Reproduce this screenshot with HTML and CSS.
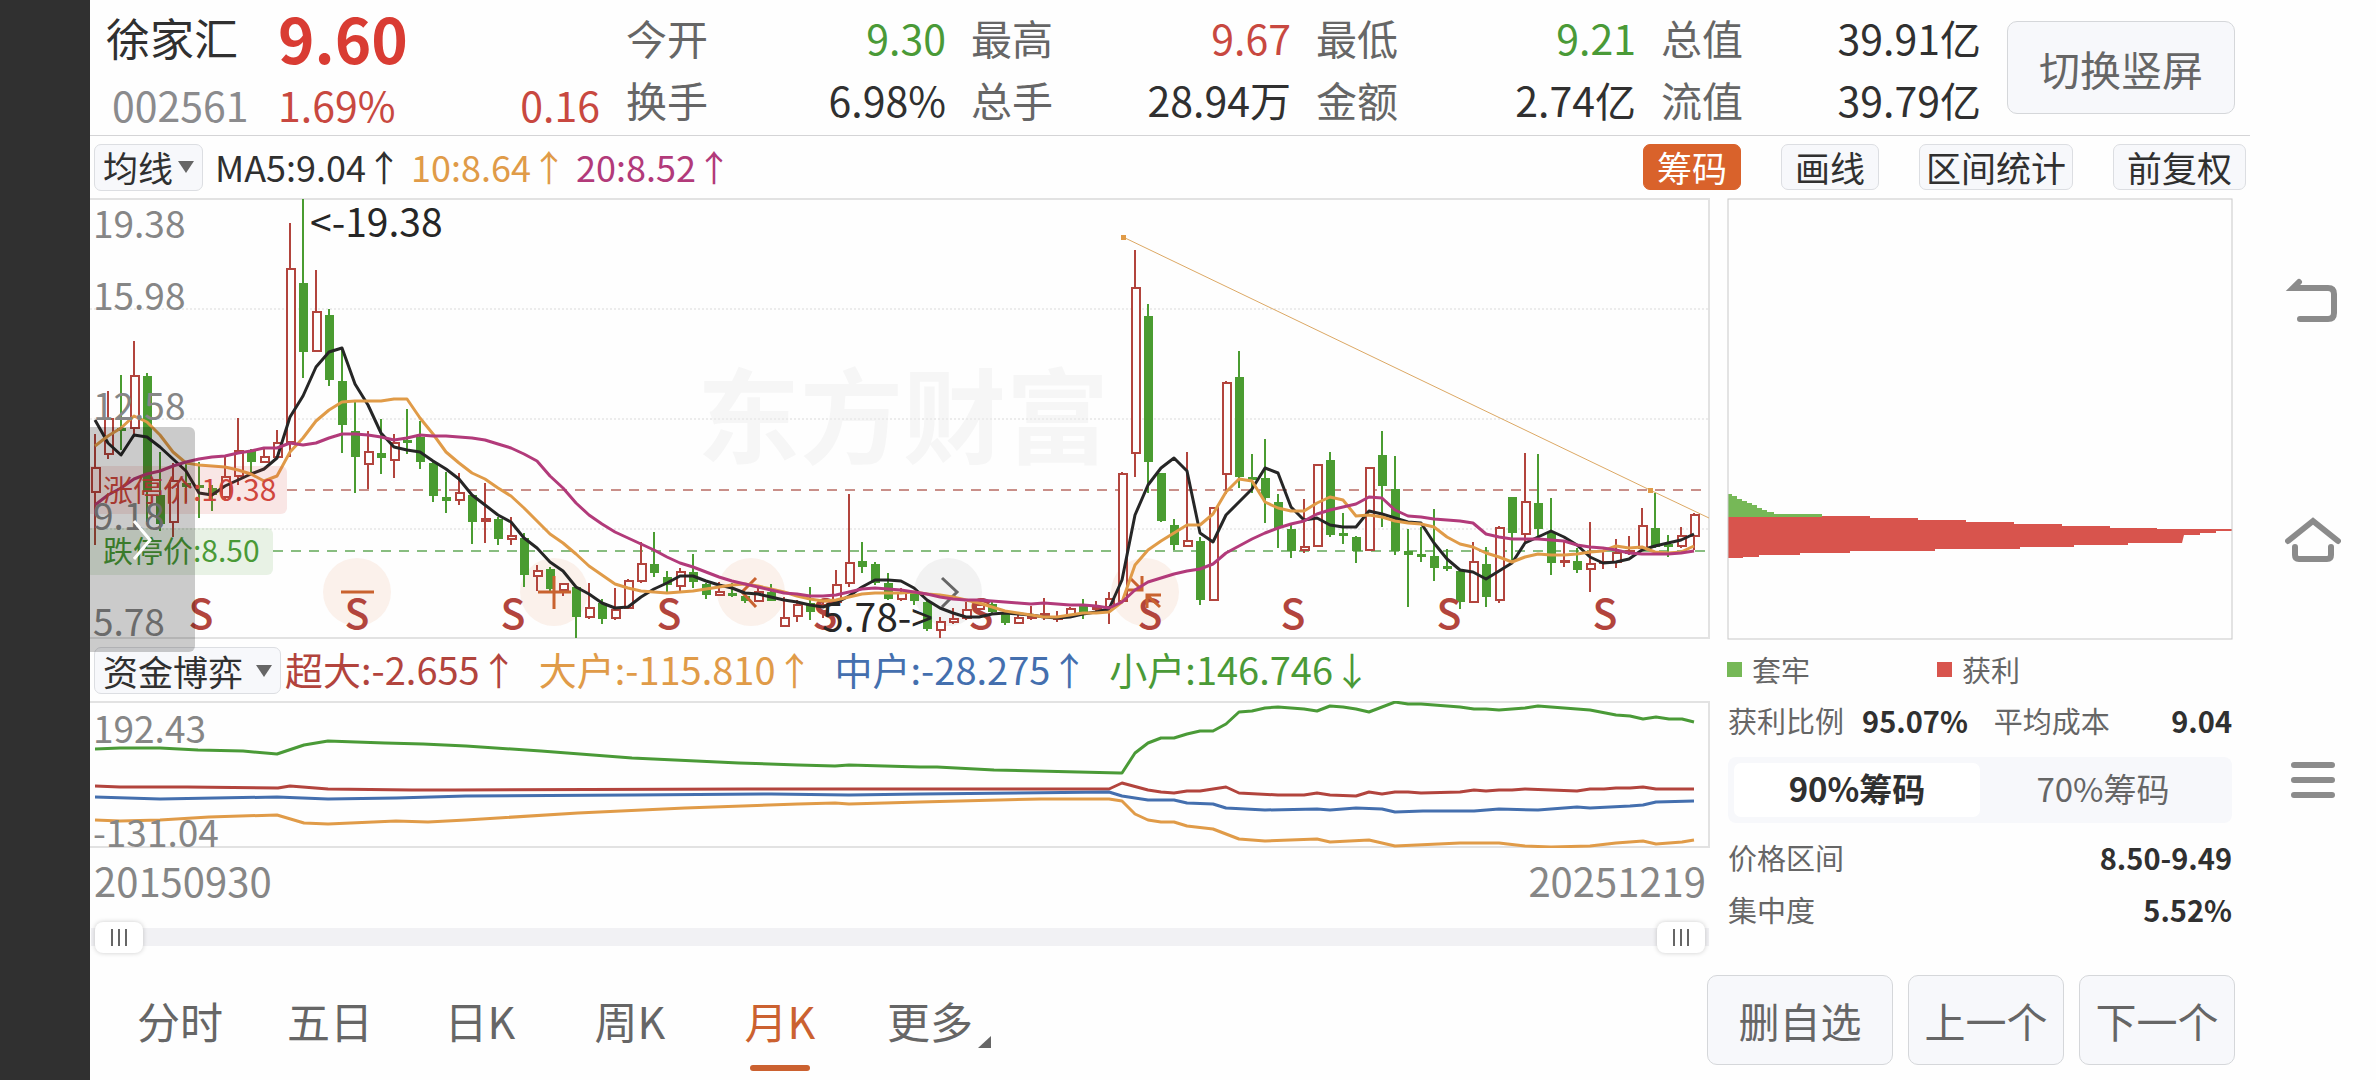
FILE: index.html
```
<!DOCTYPE html>
<html lang="zh-CN">
<head>
  <meta charset="UTF-8" />
  <meta name="viewport" content="width=device-width, initial-scale=1.0"/>
  <title>徐家汇 002561</title>
  <link rel="stylesheet" href="styles.css">
</head>
<body>
  <div class="bezel"></div>

  <main class="app">
    <header class="summary">
      <div class="quote">
        <h1 class="name">徐家汇</h1>
        <strong class="price">9.60</strong>
        <span class="code">002561</span>
        <div class="change"><span>1.69%</span><span>0.16</span></div>
      </div>
      <dl class="stats">
        <div><dt>今开</dt><dd class="down">9.30</dd></div>
        <div><dt>最高</dt><dd class="up">9.67</dd></div>
        <div><dt>最低</dt><dd class="down">9.21</dd></div>
        <div><dt>总值</dt><dd>39.91亿</dd></div>
        <div><dt>换手</dt><dd>6.98%</dd></div>
        <div><dt>总手</dt><dd>28.94万</dd></div>
        <div><dt>金额</dt><dd>2.74亿</dd></div>
        <div><dt>流值</dt><dd>39.79亿</dd></div>
      </dl>
      <button class="btn rotate">切换竖屏</button>
    </header>

    <div class="toolbar">
      <div class="picker">
        <select aria-label="主图指标"><option>均线</option></select>
        <span class="caret"></span>
      </div>
      <p class="ma-values">
        <span>MA5:9.04↑</span>
        <span class="ma10">10:8.64↑</span>
        <span class="ma20">20:8.52↑</span>
      </p>
      <div class="tools">
        <button class="tool active">筹码</button>
        <button class="tool">画线</button>
        <button class="tool wide">区间统计</button>
        <button class="tool">前复权</button>
      </div>
    </div>

    <div class="content">
      <section class="charts">
        <div class="kline">
          <svg id="kline" viewBox="90 198 1620 442">
            <text class="watermark" x="697" y="456">东方财富</text>
            <g class="frame">
              <path d="M90 199H1709V638H90"/>
              <path class="dots" d="M90 309H1709M90 419H1709M90 529H1709"/>
            </g>
            <path class="limit-up" d="M287 490H1709"/>
            <path class="limit-down" d="M273 551H1709"/>
            <g class="marks">
              <circle cx="357" cy="592" r="34"/>
              <circle cx="554" cy="592" r="34"/>
              <circle cx="751" cy="592" r="34"/>
              <circle class="gray" cx="948" cy="592" r="34"/>
              <circle cx="1145" cy="592" r="34"/>
            </g>
            <g id="candles"></g>
            <g class="trend">
              <path d="M1123 237L1650 490L1709 518"/>
              <rect x="1121" y="235" width="5" height="5"/>
              <rect x="1648" y="488" width="5" height="5"/>
            </g>
            <g id="signals" class="signals"></g>
            <g class="mark-icons">
              <path d="M341 592H374"/>
              <path d="M538 592H571M554 576V609"/>
              <path d="M756 578L742 592L756 607"/>
              <path class="gray" d="M942 578L957 592L942 607"/>
              <path d="M1130 578L1141 589M1142 576V590H1128M1161 595H1147V608M1148 596L1160 607"/>
            </g>
            <g id="averages"></g>
            <g class="note">
              <text x="310" y="237">&lt;-19.38</text>
              <text x="822" y="632">5.78-&gt;</text>
            </g>
            <rect class="tag-up" x="86" y="466" width="201" height="48" rx="6"/>
            <rect class="tag-down" x="86" y="528" width="187" height="47" rx="6"/>
            <text class="tag-text up" x="103" y="501">涨停价:10.38</text>
            <text class="tag-text down" x="103" y="562">跌停价:8.50</text>
            <g class="axis">
              <text x="93" y="238">19.38</text>
              <text x="93" y="310">15.98</text>
              <text x="93" y="420">12.58</text>
              <text x="93" y="530">9.18</text>
              <text x="93" y="636">5.78</text>
            </g>
          </svg>
          <button class="drawer" aria-label="展开">
            <svg viewBox="0 0 20 42"><path d="M2 2L18 21L2 40"/></svg>
          </button>
        </div>

        <div class="flow-bar">
          <div class="picker">
            <select class="wide" aria-label="副图指标"><option>资金博弈</option></select>
            <span class="caret"></span>
          </div>
          <p class="flow-values">
            <span class="huge">超大:-2.655↑</span>
            <span class="big">大户:-115.810↑</span>
            <span class="mid">中户:-28.275↑</span>
            <span class="small">小户:146.746↓</span>
          </p>
        </div>

        <svg class="flow" viewBox="90 701 1620 147">
          <path class="flow-frame" d="M90 702H1709V847H90"/>
          <polyline class="small" points="95,749 120,748 134,748 160,748 198,750 243,751 277,754 304,745 328,741 356,742 385,743 423,744 466,746 541,751 632,758 739,763 798,765 835,766 849,765 920,767 937,767 994,770 1120,773 1122,773 1135,753 1148,743 1161,738 1174,738 1187,734 1200,731 1213,731 1226,724 1239,712 1252,711 1265,708 1278,707 1291,708 1304,709 1317,711 1330,706 1343,707 1356,709 1369,712 1395,702 1408,704 1421,704 1460,707 1474,709 1486,709 1499,710 1512,709 1525,708 1538,706 1577,709 1590,710 1616,715 1630,716 1643,719 1656,717 1669,719 1682,719 1694,722"/>
          <polyline class="huge" points="95,786 120,787 187,787 278,788 290,786 328,789 412,790 455,790 750,789 920,789 1031,789 1109,789 1122,783 1148,790 1161,792 1174,793 1187,791 1200,791 1226,787 1239,793 1278,795 1304,795 1317,793 1330,795 1356,796 1369,792 1382,794 1395,792 1408,792 1421,793 1460,792 1474,790 1486,791 1499,790 1512,790 1525,789 1551,790 1577,791 1590,789 1604,789 1616,788 1630,788 1643,787 1656,789 1694,789"/>
          <polyline class="mid" points="95,797 160,799 277,797 328,799 396,798 466,796 632,795 771,794 849,795 920,794 1109,792 1122,796 1148,800 1161,800 1174,800 1187,803 1213,804 1226,808 1265,810 1317,809 1330,810 1356,808 1382,809 1395,812 1423,811 1474,811 1499,809 1538,810 1577,807 1590,808 1630,806 1643,805 1656,802 1694,801"/>
          <polyline class="big" points="95,820 120,821 160,820 209,817 277,815 304,823 328,824 396,821 428,822 466,820 578,813 685,808 798,804 835,803 849,804 920,802 1041,799 1109,799 1122,801 1135,814 1148,820 1161,822 1174,822 1187,826 1213,829 1239,839 1265,841 1317,839 1330,842 1369,840 1395,846 1460,843 1499,843 1525,846 1551,847 1590,846 1616,843 1643,841 1656,844 1682,842 1694,840"/>
          <g class="axis">
            <text x="93" y="743">192.43</text>
            <text x="93" y="847">-131.04</text>
          </g>
        </svg>

        <div class="dates"><time>20150930</time><time>20251219</time></div>

        <div class="range">
          <input type="range" aria-label="开始日期" min="0" max="123" value="0">
          <input type="range" aria-label="结束日期" min="0" max="123" value="123">
        </div>
      </section>

      <aside class="chips">
        <svg class="chip-chart" viewBox="1727 198 506 442">
          <path class="trapped" d="M1728 494H1732V496H1737V499H1742V501H1747V503H1752V505H1757V508H1762V510H1767V512H1774V514H1822V517H1728Z"/>
          <path class="profit" d="M1728 517H1822V516H1870V518H1918V520H1966V522H2014V524H2062V526H2110V528H2157V529H2232V531H2216V533H2200V535H2184L2182 543H2128V545H2074V547H2020V549H1935V551H1850V553H1800V555H1759V557H1743V558H1728Z"/>
          <rect class="chip-frame" x="1728" y="199" width="504" height="440"/>
        </svg>
        <ul class="legend">
          <li><i class="trapped"></i>套牢</li>
          <li><i class="profit"></i>获利</li>
        </ul>
        <dl class="facts">
          <dt>获利比例</dt><dd>95.07%</dd>
          <dt>平均成本</dt><dd class="end">9.04</dd>
        </dl>
        <div class="segment">
          <button class="on">90%筹码</button>
          <button>70%筹码</button>
        </div>
        <dl class="facts"><dt>价格区间</dt><dd class="end">8.50-9.49</dd></dl>
        <dl class="facts"><dt>集中度</dt><dd class="end">5.52%</dd></dl>
      </aside>
    </div>

    <footer class="bottom">
      <nav class="tabs">
        <button>分时</button>
        <button>五日</button>
        <button>日K</button>
        <button>周K</button>
        <button class="on">月K</button>
        <button class="more">更多</button>
      </nav>
      <div class="actions">
        <button class="btn remove">删自选</button>
        <button class="btn">上一个</button>
        <button class="btn">下一个</button>
      </div>
    </footer>
  </main>

  <nav class="system">
    <button aria-label="返回"><svg viewBox="0 0 56 48"><path d="M14 6L8 12H43Q49 12 49 18V37Q49 43 43 43H15"/></svg></button>
    <button aria-label="主页"><svg viewBox="0 0 56 48"><path d="M3 25L28 5L53 25M10 31V39Q10 43 14 43H42Q46 43 46 39V31"/></svg></button>
    <button aria-label="菜单"><svg viewBox="0 0 56 48"><path d="M9 9H47M9 24H47M9 39H47"/></svg></button>
  </nav>

  <script src="chart.js"></script>
</body>
</html>
```
FILE: styles.css
```
* {
  box-sizing: border-box;
}

body {
  display: flex;
  min-height: 100vh;
  margin: 0;
  background: #fefefe;
  color: #303030;
  font-family: "Noto Sans CJK SC", sans-serif;
  font-size: 41px;
}

h1, p, dl, dd, ul {
  margin: 0;
  padding: 0;
}

button, select {
  font-family: inherit;
  font-size: inherit;
  color: inherit;
  padding: 0;
  border: none;
  background: none;
  cursor: pointer;
}

.bezel {
  flex: none;
  width: 90px;
  background: #303030;
}

.app {
  flex: 1;
  min-width: 0;
  display: flex;
  flex-direction: column;
}

/* top summary */
.summary {
  display: flex;
  align-items: flex-start;
  gap: 26px;
  padding: 6px 15px 0 16px;
  height: 136px;
  border-bottom: 1px solid #d4d4d6;
}

.quote {
  display: grid;
  grid-template-columns: 172px 322px;
  line-height: 62px;
}

.name {
  font-size: 44px;
  font-weight: 400;
}

.price {
  font-size: 62px;
  color: #d93c33;
}

.code {
  padding: 5px 0 0 6px;
  color: #8b8b8d;
}

.change {
  display: flex;
  justify-content: space-between;
  padding-top: 5px;
  color: #c84840;
}

.stats {
  flex: 1;
  display: grid;
  grid-template-columns: repeat(4, 1fr);
  column-gap: 25px;
  line-height: 62px;
}

.stats div {
  display: flex;
  justify-content: space-between;
}

.stats dt {
  color: #666;
}

.stats .up {
  color: #c84840;
}

.stats .down {
  color: #4a9a37;
}

.btn {
  border: 1px solid #d5d7da;
  border-radius: 10px;
  background: #f7f8fb;
  color: #666;
}

.rotate {
  width: 228px;
  height: 93px;
  margin-top: 15px;
}

/* indicator rows */
.toolbar, .flow-bar {
  display: flex;
  align-items: center;
  padding-left: 4px;
}

.toolbar {
  height: 62px;
}

.picker {
  display: flex;
  align-items: center;
  height: 47px;
  padding: 0 8px;
  border: 1px solid #dcdee2;
  border-radius: 7px;
  background: #f7f8fb;
  font-size: 35px;
}

.picker select {
  appearance: none;
  width: 75px;
  height: 45px;
  line-height: 44px;
}

.picker select.wide {
  width: 153px;
}

.caret {
  border: 8px solid transparent;
  border-top: 12px solid #666;
  border-bottom: none;
}

.ma-values {
  display: flex;
  gap: 9px;
  margin-left: 12px;
  padding-bottom: 3px;
  font-size: 36px;
}

.ma10 {
  color: #e09b48;
}

.ma20 {
  color: #b23a7a;
}

.tools {
  display: flex;
  gap: 40px;
  margin-left: auto;
  padding-right: 4px;
}

.tool {
  height: 46px;
  padding: 0 13px;
  border: 1px solid #dcdee2;
  border-radius: 7px;
  background: #f7f8fb;
  font-size: 35px;
  line-height: 42px;
}

.tool.wide {
  padding: 0 6px;
}

.tool.active {
  border-color: #d9622b;
  background: #d9622b;
  color: #fff;
}

/* charts */
.content {
  display: grid;
  grid-template-columns: minmax(0, 1fr) 506px;
  column-gap: 17px;
  padding-right: 17px;
}

.content svg {
  display: block;
  width: 100%;
}

.kline {
  position: relative;
}

svg path, svg polyline {
  fill: none;
}

.frame path, .flow-frame {
  stroke: #e2e2e2;
  stroke-width: 2;
}

.frame .dots {
  stroke: #ececec;
  stroke-dasharray: 2 2;
}

.watermark {
  font-size: 103px;
  font-weight: 700;
  fill: #f6f6f6;
}

.limit-up, .limit-down {
  stroke: #c98f89;
  stroke-width: 2;
  stroke-dasharray: 10 8;
}

.limit-down {
  stroke: #88bd80;
}

.marks circle {
  fill: #fbf1eb;
}

.marks .gray {
  fill: #f2f2f2;
}

.mark-icons path {
  stroke: #c9622f;
  stroke-width: 3;
}

.mark-icons .gray {
  stroke: #666;
}

.candle-up {
  stroke: #b2443d;
  stroke-width: 2;
  fill: #fefefe;
}

.candle-down {
  stroke: #4a9c31;
  stroke-width: 2;
  fill: #4a9c31;
}

#averages polyline {
  stroke: #262626;
  stroke-width: 3;
  stroke-linejoin: round;
}

#averages .line10 {
  stroke: #e09b48;
}

#averages .line20 {
  stroke: #b23a7a;
}

.trend path {
  stroke: #dca864;
  stroke-width: 1;
}

.trend rect {
  fill: #e09b48;
}

.signals text {
  font-size: 41px;
  font-weight: 500;
  text-anchor: middle;
  fill: #b2443d;
}

.note text {
  font-size: 39px;
  fill: #262626;
}

.axis text {
  font-size: 37px;
  fill: #868686;
}

.tag-up {
  fill: rgba(217, 60, 51, 0.12);
}

.tag-down {
  fill: rgba(74, 156, 49, 0.12);
}

.tag-text {
  font-size: 30px;
}

.tag-text.up {
  fill: #d0463d;
}

.tag-text.down {
  fill: #4a9a37;
}

.drawer {
  position: absolute;
  left: 0;
  bottom: -12px;
  width: 105px;
  height: 225px;
  border-radius: 0 6px 6px 0;
  background: rgba(0, 0, 0, 0.2);
}

.drawer svg {
  width: 20px;
  margin-left: 42px;
}

.drawer path {
  stroke: #fff;
  stroke-width: 3;
}

.flow-bar {
  height: 61px;
}

.flow-values {
  display: flex;
  gap: 21px;
  margin-left: 4px;
  padding-bottom: 3px;
  font-size: 38px;
  line-height: 46px;
}

.flow-values .huge {
  color: #b2443d;
}

.flow-values .big {
  color: #e09b48;
}

.flow-values .mid {
  color: #446fae;
}

.flow-values .small {
  color: #4a9a37;
}

.flow polyline {
  stroke-width: 3;
  stroke-linejoin: round;
}

.flow .huge {
  stroke: #b2443d;
}

.flow .big {
  stroke: #e09b48;
}

.flow .mid {
  stroke: #446fae;
}

.flow .small {
  stroke: #4a9a37;
}

.dates {
  display: flex;
  justify-content: space-between;
  padding: 0 4px;
  color: #868686;
  font-size: 40px;
  line-height: 64px;
}

/* period slider, both thumbs share one track */
.range {
  display: grid;
  align-items: center;
  margin: 9px 1px 0;
  padding: 0 4px;
  background: linear-gradient(#f1f1f4, #f1f1f4) center / 100% 18px no-repeat;
}

.range input {
  grid-area: 1 / 1;
  appearance: none;
  width: 100%;
  height: 32px;
  margin: 0;
  background: none;
  pointer-events: none;
}

.range input::-webkit-slider-thumb {
  appearance: none;
  width: 48px;
  height: 31px;
  border-radius: 8px;
  background:
    linear-gradient(90deg, #666 2px, transparent 2px 7px, #666 7px 9px, transparent 9px 14px, #666 14px) center / 16px 17px no-repeat,
    #fff;
  box-shadow: 0 0 5px rgba(0, 0, 0, 0.2);
  pointer-events: auto;
}

/* chip distribution */
.chips {
  color: #666;
  font-size: 29px;
}

.chip-frame {
  fill: none;
  stroke: #c8c8c8;
  stroke-width: 1;
}

.chips path.trapped {
  fill: #76b857;
}

.chips path.profit {
  fill: #d8544d;
}

.legend {
  display: flex;
  list-style: none;
  line-height: 58px;
}

.legend li {
  display: flex;
  align-items: center;
  gap: 10px;
  width: 210px;
}

.legend i {
  width: 15px;
  height: 15px;
}

.legend .trapped {
  background: #76b857;
}

.legend .profit {
  background: #d8544d;
}

.facts {
  display: flex;
  gap: 18px;
  padding: 0 1px;
  line-height: 52px;
}

.facts dd {
  color: #303030;
  font-weight: 700;
}

.facts dd + dt {
  margin-left: 8px;
}

.facts .end {
  margin-left: auto;
}

.legend + .facts {
  line-height: 44px;
}

.segment {
  display: grid;
  grid-template-columns: 1fr 1fr;
  height: 66px;
  margin: 15px 1px 8px;
  padding: 6px;
  border-radius: 8px;
  background: #f7f8fb;
  font-size: 33px;
}

.segment button {
  padding-bottom: 4px;
  border-radius: 7px;
  line-height: 48px;
}

.segment .on {
  background: #fff;
  color: #303030;
  font-weight: 700;
}

/* bottom bar */
.bottom {
  display: flex;
  justify-content: space-between;
  align-items: flex-start;
  margin-top: auto;
  padding: 0 15px 15px;
}

.tabs {
  display: flex;
  color: #666;
  font-size: 43px;
}

.tabs button {
  position: relative;
  width: 150px;
  height: 90px;
}

.tabs .on {
  color: #cb6130;
}

.tabs .on::after {
  content: "";
  position: absolute;
  left: 45px;
  right: 45px;
  bottom: -6px;
  height: 6px;
  border-radius: 3px;
  background: #cb6130;
}

.tabs .more::after {
  content: "";
  position: absolute;
  right: 14px;
  bottom: 17px;
  border-left: 13px solid transparent;
  border-bottom: 12px solid #666;
}

.actions {
  display: flex;
  gap: 15px;
}

.actions .btn {
  width: 156px;
  height: 90px;
}

.actions .remove {
  width: 186px;
}

/* system navigation */
.system {
  flex: none;
  width: 126px;
  display: flex;
  flex-direction: column;
  align-items: center;
  justify-content: center;
  gap: 192px;
}

.system svg {
  display: block;
  width: 56px;
}

.system path {
  stroke: #8b8b8b;
  stroke-width: 6;
  stroke-linecap: round;
}
```
FILE: chart.js
```
const START = 95;
const STEP = 13;

// [direction, high, body top, body bottom, low], one per month
const candles = [
  [1,434,467,493,545],[1,391,418,455,459],[0,375,428,430,450],[1,341,375,429,437],[0,373,376,492,522],
  [0,452,495,524,531],[1,463,480,523,537],[0,463,483,487,502],[0,462,485,487,518],[0,485,488,495,511],
  [1,457,476,498,500],[1,418,450,477,485],[0,449,451,462,473],[1,448,456,463,463],[1,430,442,458,458],
  [1,223,268,443,457],[0,199,283,352,378],[1,270,311,352,352],[0,309,315,380,386],[0,348,381,425,453],
  [0,402,431,457,493],[1,431,451,465,489],[0,419,453,458,474],[1,434,442,461,478],[0,409,440,442,454],
  [0,421,437,462,469],[0,462,463,496,502],[0,472,497,501,513],[1,473,492,501,505],[0,494,495,522,544],
  [1,483,518,522,543],[0,517,519,539,545],[1,517,535,540,545],[0,533,538,575,587],[1,565,570,577,591],
  [0,567,569,589,591],[1,583,583,591,596],[0,586,587,617,638],[1,583,607,618,619],[0,599,603,619,624],
  [1,588,609,619,620],[1,579,580,609,609],[1,542,563,582,583],[0,532,564,573,577],[0,571,577,585,592],
  [1,568,571,587,593],[0,554,572,582,588],[0,583,584,595,599],[1,582,591,596,596],[0,583,593,596,597],
  [0,593,596,601,603],[1,588,591,602,602],[0,584,592,601,601],[1,597,617,627,627],[1,600,604,617,622],
  [0,587,603,612,620],[1,600,604,612,618],[1,570,584,603,603],[1,494,562,584,587],[0,542,561,567,573],
  [0,562,564,583,585],[0,573,583,599,600],[1,588,592,600,601],[0,592,593,601,605],[0,600,602,629,631],
  [1,617,621,631,638],[1,608,618,623,624],[1,602,609,619,620],[1,602,604,610,612],[0,600,604,612,615],
  [0,612,613,623,625],[1,613,617,624,624],[1,606,616,619,620],[1,598,613,615,620],[1,611,617,619,622],
  [1,607,608,617,617],[0,599,604,612,619],[1,601,606,610,612],[1,592,598,608,624],[1,472,473,602,602],
  [1,250,287,454,477],[0,304,316,462,493],[0,473,473,521,522],[0,519,525,545,550],[1,452,540,547,547],
  [0,537,541,600,605],[1,507,507,601,601],[1,381,382,475,494],[0,351,377,477,488],[0,454,477,480,493],
  [0,439,478,498,523],[0,494,502,528,548],[0,523,529,551,558],[1,499,546,551,553],[1,464,464,547,547],
  [0,452,460,535,537],[0,513,533,535,544],[0,536,537,551,563],[1,467,467,551,551],[0,431,455,486,527],
  [0,456,489,551,555],[0,529,551,555,607],[0,527,554,556,562],[0,509,556,568,581],[0,549,566,568,571],
  [0,570,571,602,609],[1,542,561,603,603],[0,547,564,597,607],[1,526,527,601,603],[0,497,497,533,563],
  [1,453,501,535,542],[0,454,503,529,537],[0,498,533,563,575],[1,542,560,563,567],[0,548,561,570,573],
  [1,522,563,570,592],[1,552,561,562,569],[1,539,552,563,568],[1,536,550,554,555],[1,508,525,549,549],
  [0,493,528,547,548],[0,535,544,546,557],[1,527,535,547,548],[1,513,514,537,550]
];

const averages = {
  line5: [420,443,455,435,437,447,459,471,493,495,486,480,474,469,458,417,396,367,352,348,384,405,433,447,450,452,461,469,479,495,
    505,515,522,538,548,562,571,587,594,603,608,607,597,589,583,576,576,581,585,588,593,594,597,600,602,605,607,603,596,587,580,
    580,581,588,600,608,613,617,617,614,613,614,615,617,618,617,614,612,609,580,515,485,468,458,471,533,542,515,502,489,468,473,507,
    520,518,525,527,527,511,514,518,522,523,543,559,570,572,579,571,563,543,537,531,537,545,557,563,562,559,550,546,543,540,534],
  line10: [446,436,428,416,422,435,452,463,465,466,467,470,474,481,476,452,438,421,410,402,401,401,401,399,399,418,434,452,463,473,
    479,488,496,508,521,534,543,554,566,575,584,588,591,592,593,592,591,589,587,585,584,586,589,592,596,599,601,600,597,594,593,
    593,593,592,594,595,597,600,603,607,611,613,615,617,617,615,613,613,612,602,565,550,541,533,525,525,514,492,479,481,502,508,511,
    511,503,497,500,516,515,517,521,523,524,527,537,544,547,553,557,562,557,554,555,555,554,552,551,546,548,547,552,553,552,546],
  line20: [505,495,488,479,474,471,466,462,459,457,456,453,451,448,448,443,445,443,438,434,434,435,437,440,438,435,436,436,437,438,
    440,444,448,454,461,476,488,503,515,524,532,538,544,550,557,563,567,572,577,581,584,587,590,593,594,596,596,595,592,589,588,
    589,590,592,594,597,599,600,600,601,602,603,604,603,604,605,605,606,608,602,590,582,578,574,571,569,564,553,546,539,533,528,524,
    521,514,510,507,504,497,498,510,516,517,519,520,521,523,534,537,539,539,539,540,541,545,547,548,550,553,554,554,554,553,551]
};

const signals = [201, 357, 513, 669, 825, 981, 1150, 1293, 1449, 1605];

document.getElementById("candles").innerHTML = candles.map(([up, high, top, bottom, low], i) => {
  const x = START + STEP * i;
  const height = Math.max(bottom - top - 2, 1);
  return `<g class="candle-${up ? "up" : "down"}">
    <path d="M${x} ${high}V${top}M${x} ${bottom}V${low}"/>
    <rect x="${x - 3}" y="${top + 1}" width="${up ? 8 : 7}" height="${height}"/>
  </g>`;
}).join("");

document.getElementById("averages").innerHTML = Object.entries(averages).map(([name, values]) => {
  const points = values.map((y, i) => `${START + STEP * i},${y}`).join(" ");
  return `<polyline class="${name}" points="${points}"/>`;
}).join("");

document.getElementById("signals").innerHTML =
  signals.map(x => `<text x="${x}" y="629">S</text>`).join("");
```
